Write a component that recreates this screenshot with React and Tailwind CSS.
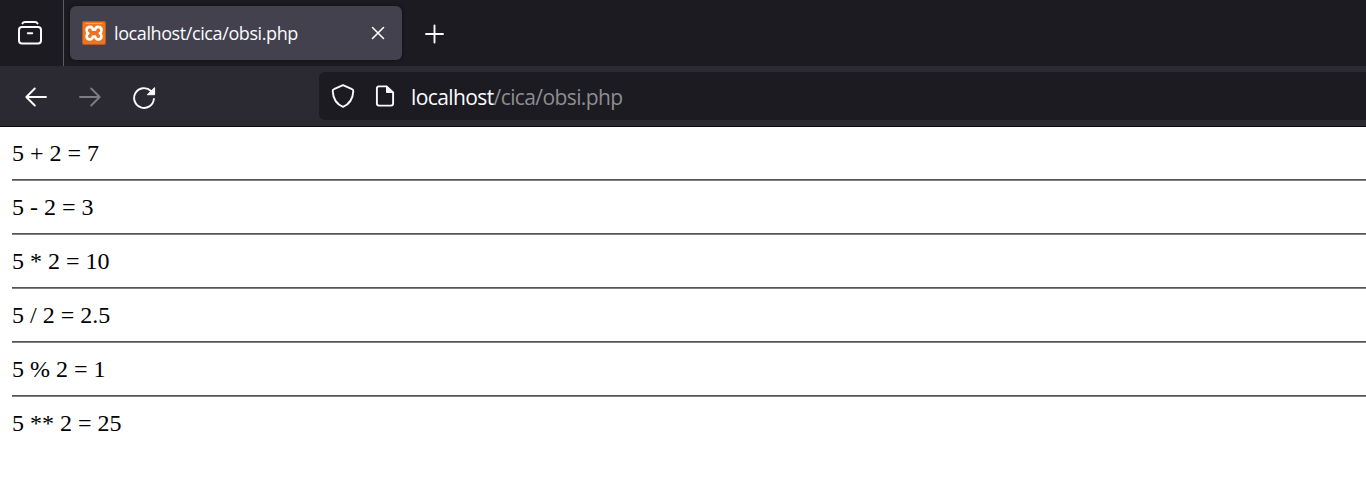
const EQUATIONS = ["5 + 2 = 7", "5 - 2 = 3", "5 * 2 = 10", "5 / 2 = 2.5", "5 % 2 = 1", "5 ** 2 = 25"];

function Icon({ className = "", size = 24, children, width = 2 }) {
  return (
    <svg
      className={`shrink-0 ${className}`}
      width={size}
      height={size}
      viewBox={`0 0 ${size} ${size}`}
      fill="none"
      stroke="currentColor"
      strokeWidth={width}
      strokeLinecap="round"
      strokeLinejoin="round"
    >
      {children}
    </svg>
  );
}

function Favicon() {
  return (
    <svg className="shrink-0" width="24" height="24" viewBox="0 0 24 24" fill="none">
      <rect width="24" height="24" rx="2" fill="#bd5a18" />
      <rect x="1" y="1" width="22" height="22" rx="1.5" fill="#ee7420" />
      <path d="M3.5 2.5h17" stroke="#f9a66c" />
      <path
        d="M8.300 5.900C10.300 5.900 10.600 7.200 10.900 8.800H13.100C13.400 7.200 13.900 5.900 15.900 5.900C18.300 5.900 19.500 7.200 19.500 9.200C19.500 10.700 18.900 11.600 17.800 12.300C18.900 13 19.500 14 19.500 15.300C19.500 17.200 18.100 18.400 16.100 18.400C14 18.400 13.500 17.200 13.100 15.500H10.900C10.500 17.200 10 18.400 7.900 18.400C5.900 18.400 4.600 17.200 4.600 15.300C4.600 14 5.200 13 6.300 12.300C5.200 11.600 4.600 10.700 4.600 9.200C4.600 7.200 6 5.900 8.300 5.900Z"
        stroke="#fff"
        strokeWidth="2.6"
        strokeLinejoin="round"
      />
    </svg>
  );
}

function TabStrip() {
  return (
    <div className="flex h-[66px] bg-[#1c1b22]">
      <div className="flex w-16 items-center border-r border-[#5b5b66] pl-[18px] text-[#fbfbfe]">
        <Icon>
          <path d="M4.500 2.400C5 1.400 5.800 1 7 1h10c1.200 0 2 .4 2.500 1.400" />
          <rect x="1" y="5.900" width="22" height="16.600" rx="3" />
          <path d="M9.800 12.300h4.400" />
        </Icon>
      </div>
      <div className="ml-1.5 mt-1.5 flex h-[54px] w-[332px] items-center rounded-md bg-[#42414d] pl-3 pr-3 text-[#fbfbfe] shadow-[0_0_4px_rgba(0,0,0,0.5)]">
        <Favicon />
        <span className="ml-2 flex-1 whitespace-nowrap font-['Open_Sans',sans-serif] text-[18px] leading-6 tracking-[-0.4px]">
          localhost/cica/obsi.php
        </span>
        <Icon width={1.6}>
          <path d="M6.500 6.500l11 11M17.500 6.500l-11 11" />
        </Icon>
      </div>
      <div className="ml-5 flex items-center pt-0.5 text-[#fbfbfe]">
        <Icon>
          <path d="M12.500 3.500v17M4 12h17" strokeWidth="1.9" />
        </Icon>
      </div>
    </div>
  );
}

function Toolbar() {
  return (
    <div className="flex h-[61px] border-b border-[#0c0c0d] bg-[#2b2a33] pt-1.5 text-[#fbfbfe]">
      <div className="flex h-12 w-[319px] items-center gap-[30px] pl-6 pt-0.5">
        <Icon>
          <path d="M22 12H2.300M10.800 3.500L2.300 12l8.500 8.500" strokeWidth="1.9" />
        </Icon>
        <Icon className="text-[#7d7c83]">
          <path d="M2 12h19.700M13.200 3.500l8.500 8.500-8.500 8.500" strokeWidth="1.9" />
        </Icon>
        <Icon>
          <path d="M21.900 14A9.900 9.900 0 1 1 19 6" strokeWidth="1.9" />
          <path d="M22.600 3v6.700h-7z" fill="currentColor" strokeWidth="1" />
        </Icon>
      </div>
      <div className="flex h-12 flex-1 items-center rounded-l-md bg-[#1c1b22] pl-3">
        <Icon>
          <path d="M12 1.200L21 5.100c1 .4 1.400.9 1.300 2C21.900 14.700 18 20.300 12 22.800C6 20.300 2.100 14.700 1.700 7.100c-.1-1.100.3-1.600 1.300-2z" strokeWidth="1.9" />
        </Icon>
        <Icon className="ml-[18px]">
          <path d="M13.500 2.400H6c-1.500 0-2.100.6-2.100 2.100v15c0 1.500.6 2.100 2.100 2.100h12c1.500 0 2.100-.6 2.100-2.100V8.500z" strokeWidth="1.9" />
          <path d="M13.500 2.400v6.100h6.500z" fill="currentColor" strokeWidth="1" />
        </Icon>
        <div className="ml-[14px] whitespace-nowrap pt-0.5 font-['Open_Sans',sans-serif] text-[21px] leading-7 tracking-[-0.6px]">
          <span>localhost</span>
          <span className="text-[#8d8d91]">/cica/obsi.php</span>
        </div>
      </div>
    </div>
  );
}

export default function App() {
  return (
    <div className="flex h-[487px] flex-col overflow-hidden bg-white">
      <TabStrip />
      <Toolbar />
      <main className="divide-y divide-[#808080] pl-3 font-['Liberation_Serif',serif] text-[24px] leading-[52px] text-black">
        {EQUATIONS.map((equation) => (
          <div key={equation} className="group">
            <div className="h-[53px] border-b border-[#555555] group-last:border-b-0">{equation}</div>
          </div>
        ))}
      </main>
    </div>
  );
}
